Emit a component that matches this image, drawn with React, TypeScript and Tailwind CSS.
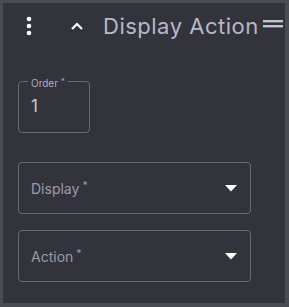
import React from "react";

function Label({ t, size }: { t: string; size: string }) {
  return (
    <span className={size}>
      {t}
      <span className="text-[0.75em] align-[0.45em] ml-[3px]">*</span>
    </span>
  );
}

export default function App() {
  return (
    <div className="w-[289px] h-[307px] bg-[#4a4b53] pl-[3px] pt-[3px] pr-[4px] pb-[4px]" style={{ fontFamily: "Inter, 'Open Sans', sans-serif" }}>
      <div className="w-full h-full bg-[#32333b] relative">
        <div className="flex items-center h-[46px]">
          <div className="w-[52px] flex justify-center">
            <svg width="8" height="20" viewBox="0 0 8 20">
              <circle cx="4" cy="3" r="2.3" fill="#fff" />
              <circle cx="4" cy="10" r="2.3" fill="#fff" />
              <circle cx="4" cy="17" r="2.3" fill="#fff" />
            </svg>
          </div>
          <div className="w-[44px] flex justify-center">
            <svg width="14" height="10" viewBox="0 0 14 10">
              <path d="M2 8 L7 3 L12 8" stroke="#fff" strokeWidth="2.2" fill="none" />
            </svg>
          </div>
          <div className="ml-[4px] text-[22px] text-[#b8b8c8] leading-none tracking-[0.5px]">Display Action</div>
          <svg className="ml-[4px] -mt-[4px]" width="20" height="8" viewBox="0 0 20 8">
            <rect x="0" y="0" width="20" height="2.4" fill="#c4c4d0" />
            <rect x="0" y="5" width="20" height="2.4" fill="#c4c4d0" />
          </svg>
        </div>
        <div className="pl-[15px] pt-[32px]">
          <div className="relative w-[72px] h-[52px] border border-[#6a6a72] rounded-[4px]">
            <div className="absolute -top-[7px] left-[9px] px-[3px] bg-[#32333b] leading-[12px] text-[#b0b0bc]">
              <Label t="Order" size="text-[10px]" />
            </div>
            <div className="pl-[12px] pt-[14px] text-[17px] text-[#c8c8d4] leading-[20px]">1</div>
          </div>
        </div>
        <div className="pl-[15px] pt-[29px] flex flex-col gap-[16px]">
          {["Display", "Action"].map((t) => (
            <div key={t} className="w-[233px] h-[52px] border border-[#6a6a72] rounded-[4px] flex items-center justify-between pl-[12px] pr-[13px]">
              <span className="text-[#9c9ca8] leading-none">
                <Label t={t} size="text-[14px]" />
              </span>
              <svg width="12" height="7" viewBox="0 0 12 7">
                <path d="M0 0 L12 0 L6 6.5 Z" fill="#fff" />
              </svg>
            </div>
          ))}
        </div>
      </div>
    </div>
  );
}
